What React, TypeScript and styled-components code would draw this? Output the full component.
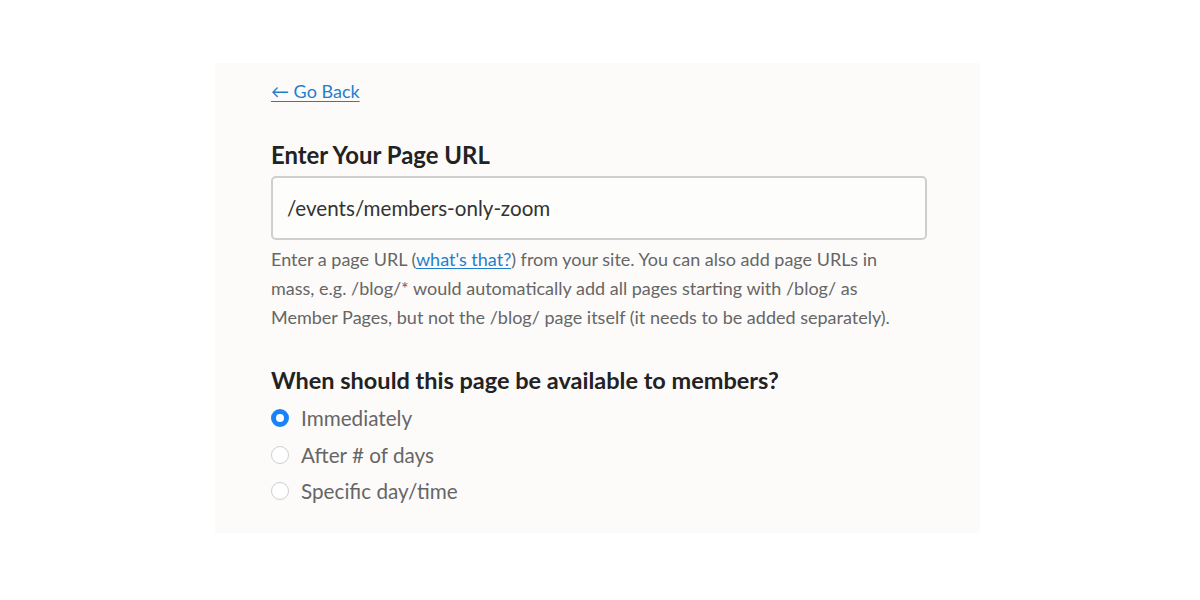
import React, { useState } from "react";
import styled, { createGlobalStyle } from "styled-components";

const Global = createGlobalStyle`
  html, body { margin: 0; padding: 0; background: #ffffff; }
  body { font-family: Lato, "Open Sans", sans-serif; }
  * { box-sizing: border-box; }
`;

const Page = styled.div`
  width: 1200px;
  height: 600px;
  padding-top: 63px;
  padding-left: 215px;
  display: flex;
  justify-content: flex-start;
`;

const Panel = styled.div`
  width: 765px;
  height: 470px;
  background: #fcfbfa;
  padding: 16px 53px 0 56px;
  display: flex;
  flex-direction: column;
`;

const BackLink = styled.a`
  color: #1f7fcf;
  font-size: 18px;
  line-height: 24px;
  text-decoration: underline;
  text-underline-offset: 3px;
  text-decoration-thickness: 1px;
  align-self: flex-start;
  cursor: pointer;
`;

const Heading = styled.h2<{ $top: number; $size: number }>`
  margin: ${(p) => p.$top}px 0 0;
  font-size: ${(p) => p.$size}px;
  font-weight: 700;
  color: #222222;
  line-height: 30px;
`;

const UrlInput = styled.input`
  margin-top: 6px;
  width: 656px;
  height: 64px;
  border: 2px solid #cfcfcf;
  border-radius: 5px;
  background: #fdfdfc;
  padding: 0 14px;
  font-family: Lato, sans-serif;
  font-size: 20.6px;
  color: #333333;
  outline: none;
`;

const Help = styled.p`
  margin: 5px 0 0;
  width: 660px;
  font-size: 18px;
  line-height: 29px;
  color: #666666;
`;

const InlineLink = styled.a`
  color: #1f7fcf;
  text-decoration: underline;
  text-underline-offset: 2px;
  cursor: pointer;
`;

const Options = styled.div`
  margin-top: 5px;
  display: flex;
  flex-direction: column;
`;

const Option = styled.label`
  display: flex;
  align-items: center;
  gap: 12px;
  height: 36.5px;
  font-size: 20.7px;
  color: #666666;
  cursor: pointer;
`;

const Dot = styled.span<{ $on: boolean }>`
  width: 18px;
  height: 18px;
  border-radius: 50%;
  flex: none;
  background: #ffffff;
  border: ${(p) => (p.$on ? "5px solid #1a82f7" : "1px solid #cfcfcf")};
`;

const options = ["Immediately", "After # of days", "Specific day/time"];

export default function App() {
  const [sel, setSel] = useState(0);
  return (
    <>
      <Global />
      <Page>
        <Panel>
          <BackLink>← Go Back</BackLink>
          <Heading $top={37} $size={23.9}>
            Enter Your Page URL
          </Heading>
          <UrlInput defaultValue="/events/members-only-zoom" />
          <Help>
            Enter a page URL (<InlineLink>what's that?</InlineLink>) from your
            site. You can also add page URLs in
            <br />
            mass, e.g. /blog/* would automatically add all pages starting with
            /blog/ as
            <br />
            Member Pages, but not the /blog/ page itself (it needs to be added
            separately).
          </Help>
          <Heading $top={33} $size={23.5}>
            When should this page be available to members?
          </Heading>
          <Options>
            {options.map((o, i) => (
              <Option key={o} onClick={() => setSel(i)}>
                <Dot $on={sel === i} />
                {o}
              </Option>
            ))}
          </Options>
        </Panel>
      </Page>
    </>
  );
}
